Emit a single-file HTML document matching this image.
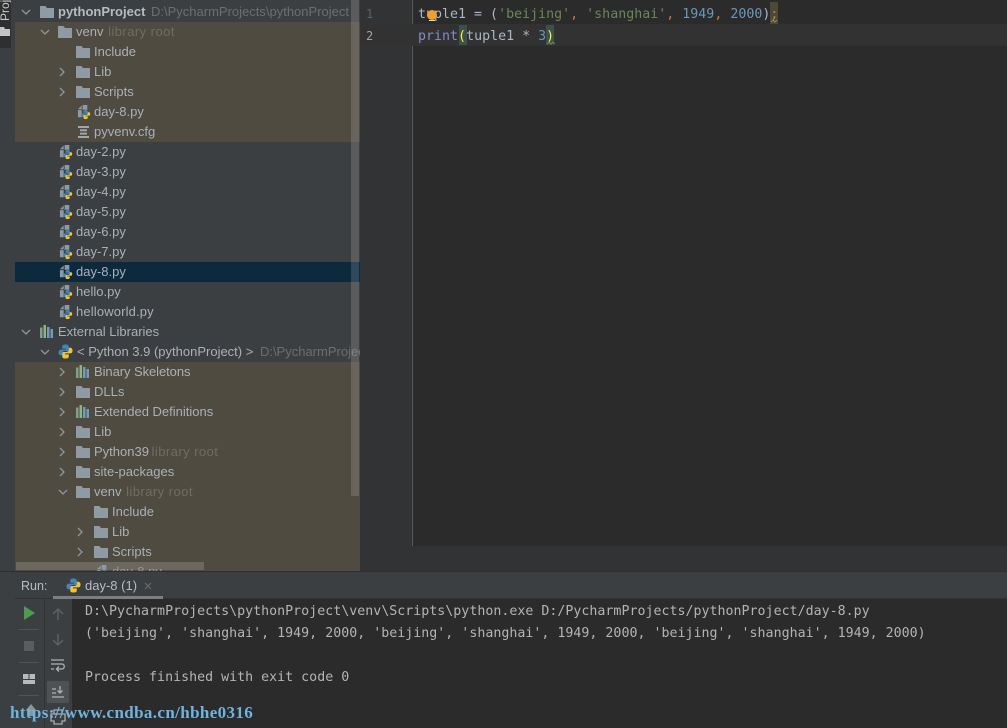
<!DOCTYPE html>
<html><head><meta charset="utf-8">
<style>
html,body{margin:0;padding:0;background:#2b2b2b}
#p{position:relative;width:1007px;height:728px;overflow:hidden;background:#2b2b2b;font-family:"Liberation Sans",sans-serif;font-size:13px;color:#a9b7c6}
#p div{position:absolute}
.r{height:20px;line-height:20px;white-space:nowrap;color:#a9b1b7}
.g{color:#6a6f72}
.l{color:#6f6d64;letter-spacing:.45px}
svg{position:absolute;overflow:visible}
.m{font-family:"DejaVu Sans Mono","Liberation Mono",monospace;white-space:pre}
.c{font-size:13.28px;height:22px;line-height:22px;left:418px;color:#a9b7c6;letter-spacing:.02px}
.o{font-size:13.28px;height:22px;line-height:22px;left:85px;color:#b4b4b4;letter-spacing:.02px}
.s{color:#6a8759}.n{color:#6897bb}.k{color:#cc7832}.f{color:#8888c6}
</style></head><body><div id="p">
<svg width="0" height="0" style="position:absolute">
<defs>
<symbol id="fo" viewBox="0 0 14 12"><path d="M0 0h5.500l1.500 2h7v10H0z" fill="#8e9aa4"/></symbol>
<symbol id="pl" viewBox="0 0 16 16"><path d="M8 .5C5.500.5 4.500 1.500 4.500 3V5H8.500V6H3C1.500 6 .5 7 .5 9S1.500 12 3 12H4.500V10C4.500 8.500 5.500 7.500 7 7.500H10C11 7.500 11.500 7 11.500 6V3C11.500 1.500 10.500.5 8 .5Z" fill="#3f86bf"/><path d="M8 .5C5.500.5 4.500 1.500 4.500 3V5H8.500V6H3C1.500 6 .5 7 .5 9S1.500 12 3 12H4.500V10C4.500 8.500 5.500 7.500 7 7.500H10C11 7.500 11.500 7 11.500 6V3C11.500 1.500 10.500.5 8 .5Z" fill="#f0c33c" transform="rotate(180 8 8)"/></symbol>
<symbol id="py" viewBox="0 0 16 16"><path d="M1 4.500L5 0.500V4.500zM6 0h5v5H6c-1 0-1 1-1 1v7H1V5.500h5z" fill="#8d99a3"/><g transform="translate(4 5) scale(.65)"><path d="M8 .5C5.500.5 4.500 1.500 4.500 3V5H8.500V6H3C1.500 6 .5 7 .5 9S1.500 12 3 12H4.500V10C4.500 8.500 5.500 7.500 7 7.500H10C11 7.500 11.500 7 11.500 6V3C11.500 1.500 10.500.5 8 .5Z" fill="#3f86bf"/><path d="M8 .5C5.500.5 4.500 1.500 4.500 3V5H8.500V6H3C1.500 6 .5 7 .5 9S1.500 12 3 12H4.500V10C4.500 8.500 5.500 7.500 7 7.500H10C11 7.500 11.500 7 11.500 6V3C11.500 1.500 10.500.5 8 .5Z" fill="#f0c33c" transform="rotate(180 8 8)"/></g></symbol>
<symbol id="li" viewBox="0 0 14 14"><path d="M0 2.500h2.500V13H0z" fill="#7fa28f"/><path d="M3.500 0H6v13H3.500z" fill="#8fb57d"/><path d="M7 2h2.500v11H7z" fill="#6f9dbb"/><path d="M10.500 4H13v9h-2.500z" fill="#6f9dbb"/></symbol>
<symbol id="dn" viewBox="0 0 10 10"><path d="M1 3l4 4 4-4" fill="none" stroke="#8f969b" stroke-width="1.300"/></symbol>
<symbol id="rt" viewBox="0 0 10 10"><path d="M2 1l4 4-4 4" fill="none" stroke="#8f969b" stroke-width="1.300"/></symbol>
</defs></svg>

<!-- left strip -->
<div style="left:0;top:0;width:15px;height:728px;background:#3c3f41"></div>
<div style="left:0;top:0;width:11px;height:48px;background:#2d2f30"></div>
<div style="left:0;top:-1px;width:11px;height:24px;overflow:hidden"><div style="left:0;top:22px;color:#c8c8c8;font-size:12px;transform-origin:0 0;transform:rotate(-90deg);white-space:nowrap;line-height:11px">Proj</div></div>
<svg style="left:0;top:27px" width="10" height="9"><path d="M0 0h4l1 2h5v7H0z" fill="#c4c4c4"/></svg>

<!-- project pane -->
<div style="left:15px;top:0;width:345px;height:572px;background:#3c3f41"></div>
<div style="left:15px;top:22px;width:345px;height:120px;background:#4f4b41"></div>
<div style="left:15px;top:262px;width:345px;height:20px;background:#0d293e"></div>
<div style="left:15px;top:362px;width:345px;height:210px;background:#4f4b41"></div>

<svg style="left:21px;top:7px" width="10" height="10"><use href="#dn"/></svg>
<svg style="left:40px;top:6px" width="14" height="12"><use href="#fo"/></svg>
<div class="r" style="left:58px;top:2px;font-weight:bold;color:#b4bcc2">pythonProject <span class="g" style="font-weight:normal;font-size:13px;margin-left:2px">D:\PycharmProjects\pythonProject</span></div>

<svg style="left:40px;top:27px" width="10" height="10"><use href="#dn"/></svg>
<svg style="left:58px;top:26px" width="14" height="12"><use href="#fo"/></svg>
<div class="r" style="left:76px;top:22px">venv <span class="l" style="margin-left:1px">library root</span></div>

<svg style="left:76px;top:46px" width="14" height="12"><use href="#fo"/></svg>
<div class="r" style="left:94px;top:42px">Include</div>
<svg style="left:58px;top:67px" width="10" height="10"><use href="#rt"/></svg>
<svg style="left:76px;top:66px" width="14" height="12"><use href="#fo"/></svg>
<div class="r" style="left:94px;top:62px">Lib</div>
<svg style="left:58px;top:87px" width="10" height="10"><use href="#rt"/></svg>
<svg style="left:76px;top:86px" width="14" height="12"><use href="#fo"/></svg>
<div class="r" style="left:94px;top:82px">Scripts</div>
<svg style="left:77px;top:105px" width="15" height="15"><use href="#py"/></svg>
<div class="r" style="left:94px;top:102px">day-8.py</div>
<svg style="left:78px;top:126px" width="11" height="12"><path d="M0 0h11v2H0zM2 3.300h7v2H2zM2 6.600h7v2H2zM0 10h11v2H0z" fill="#a0a6aa"/></svg>
<div class="r" style="left:94px;top:122px">pyvenv.cfg</div>

<svg style="left:59px;top:145px" width="15" height="15"><use href="#py"/></svg><div class="r" style="left:76px;top:142px">day-2.py</div>
<svg style="left:59px;top:165px" width="15" height="15"><use href="#py"/></svg><div class="r" style="left:76px;top:162px">day-3.py</div>
<svg style="left:59px;top:185px" width="15" height="15"><use href="#py"/></svg><div class="r" style="left:76px;top:182px">day-4.py</div>
<svg style="left:59px;top:205px" width="15" height="15"><use href="#py"/></svg><div class="r" style="left:76px;top:202px">day-5.py</div>
<svg style="left:59px;top:225px" width="15" height="15"><use href="#py"/></svg><div class="r" style="left:76px;top:222px">day-6.py</div>
<svg style="left:59px;top:245px" width="15" height="15"><use href="#py"/></svg><div class="r" style="left:76px;top:242px">day-7.py</div>
<svg style="left:59px;top:265px" width="15" height="15"><use href="#py"/></svg><div class="r" style="left:76px;top:262px">day-8.py</div>
<svg style="left:59px;top:285px" width="15" height="15"><use href="#py"/></svg><div class="r" style="left:76px;top:282px">hello.py</div>
<svg style="left:59px;top:305px" width="15" height="15"><use href="#py"/></svg><div class="r" style="left:76px;top:302px;letter-spacing:.15px">helloworld.py</div>

<svg style="left:21px;top:327px" width="10" height="10"><use href="#dn"/></svg>
<svg style="left:40px;top:325px" width="14" height="14"><use href="#li"/></svg>
<div class="r" style="left:58px;top:322px">External Libraries</div>

<div style="left:15px;top:342px;width:345px;height:20px;overflow:hidden;background:#3c3f41">
<svg style="left:25px;top:5px" width="10" height="10"><use href="#dn"/></svg>
<svg style="left:43px;top:2px" width="15" height="15"><use href="#pl"/></svg>
<div class="r" style="left:62px;top:0">&lt; Python 3.9 (pythonProject) &gt; <span class="g" style="margin-left:3px">D:\PycharmProjects</span></div>
</div>

<svg style="left:58px;top:367px" width="10" height="10"><use href="#rt"/></svg><svg style="left:76px;top:365px" width="14" height="14"><use href="#li"/></svg><div class="r" style="left:94px;top:362px;letter-spacing:-.07px">Binary Skeletons</div>
<svg style="left:58px;top:387px" width="10" height="10"><use href="#rt"/></svg><svg style="left:76px;top:386px" width="14" height="12"><use href="#fo"/></svg><div class="r" style="left:94px;top:382px">DLLs</div>
<svg style="left:58px;top:407px" width="10" height="10"><use href="#rt"/></svg><svg style="left:76px;top:405px" width="14" height="14"><use href="#li"/></svg><div class="r" style="left:94px;top:402px">Extended Definitions</div>
<svg style="left:58px;top:427px" width="10" height="10"><use href="#rt"/></svg><svg style="left:76px;top:426px" width="14" height="12"><use href="#fo"/></svg><div class="r" style="left:94px;top:422px">Lib</div>
<svg style="left:58px;top:447px" width="10" height="10"><use href="#rt"/></svg><svg style="left:76px;top:446px" width="14" height="12"><use href="#fo"/></svg><div class="r" style="left:94px;top:442px">Python39 <span class="l" style="margin-left:-1px">library root</span></div>
<svg style="left:58px;top:467px" width="10" height="10"><use href="#rt"/></svg><svg style="left:76px;top:466px" width="14" height="12"><use href="#fo"/></svg><div class="r" style="left:94px;top:462px">site-packages</div>
<svg style="left:58px;top:487px" width="10" height="10"><use href="#dn"/></svg><svg style="left:76px;top:486px" width="14" height="12"><use href="#fo"/></svg><div class="r" style="left:94px;top:482px">venv <span class="l" style="margin-left:1px">library root</span></div>
<svg style="left:94px;top:506px" width="14" height="12"><use href="#fo"/></svg><div class="r" style="left:112px;top:502px">Include</div>
<svg style="left:76px;top:527px" width="10" height="10"><use href="#rt"/></svg><svg style="left:94px;top:526px" width="14" height="12"><use href="#fo"/></svg><div class="r" style="left:112px;top:522px">Lib</div>
<svg style="left:76px;top:547px" width="10" height="10"><use href="#rt"/></svg><svg style="left:94px;top:546px" width="14" height="12"><use href="#fo"/></svg><div class="r" style="left:112px;top:542px">Scripts</div>
<div style="left:16px;top:562px;width:188px;height:8px;background:#6a685f"></div>
<div style="left:94px;top:562px;width:80px;height:9px;overflow:hidden"><svg style="left:2px;top:3px" width="15" height="15"><use href="#py"/></svg><div class="r" style="left:18px;top:0;color:#98978f">day-8.py</div></div>
<div style="left:351px;top:0;width:8px;height:496px;background:rgba(255,255,255,.15)"></div>

<!-- editor -->
<div style="left:360px;top:0;width:53px;height:547px;background:#313335"></div>
<div style="left:412px;top:0;width:1px;height:547px;background:#555759"></div>
<div style="left:360px;top:24px;width:53px;height:22px;background:#323232"></div>
<div style="left:413px;top:24px;width:594px;height:22px;background:#323232"></div>
<div class="m" style="left:366px;top:3px;font-size:12px;line-height:22px;color:#606366">1</div>
<div class="m" style="left:366px;top:25px;font-size:12px;line-height:22px;color:#a4a3a3">2</div>
<div style="left:770px;top:2px;width:8px;height:22px;background:#4a4a36"></div>
<div style="left:459px;top:25px;width:8px;height:20px;background:#3b514d"></div>
<div style="left:546px;top:25px;width:8px;height:20px;background:#3b514d"></div>
<div class="m c" style="top:4px">tuple1 = (<span class="s">'beijing'</span><span class="k">,</span> <span class="s">'shanghai'</span><span class="k">,</span> <span class="n">1949</span><span class="k">,</span> <span class="n">2000</span>)<span class="k">;</span></div>
<div class="m c" style="top:26px"><span class="f">print</span><span style="color:#ffef28">(</span>tuple1 * <span class="n">3</span><span style="color:#ffef28">)</span></div>
<div style="left:427px;top:10px;width:10px;height:10px;border-radius:50%;background:#f0a030"></div>
<div style="left:429px;top:20px;width:6px;height:1px;background:#d9d9d9"></div>
<svg style="left:547px;top:42px" width="8" height="3"><path d="M0 2l2-2 2 2 2-2 2 2" fill="none" stroke="#6f8f6a" stroke-width=".8"/></svg>
<svg style="left:771px;top:20px" width="7" height="3"><path d="M0 2l2-2 2 2 2-2" fill="none" stroke="#8f9f7a" stroke-width=".8"/></svg>
<div style="left:360px;top:547px;width:647px;height:25px;background:#313335"></div>
<div style="left:360px;top:546px;width:647px;height:1px;background:#323232"></div>
<div style="left:0;top:571px;width:1007px;height:1px;background:#2e2f30"></div>

<!-- run tool window -->
<div style="left:15px;top:572px;width:992px;height:27px;background:#3c3f41"></div>
<div style="left:15px;top:598px;width:992px;height:1px;background:#323232"></div>
<div class="r" style="left:21px;top:576px;color:#b5bcc2;font-size:12.500px">Run:</div>
<svg style="left:66px;top:578px" width="15" height="15"><use href="#pl"/></svg>
<div class="r" style="left:85px;top:576px;color:#b5bcc2;font-size:13px">day-8 (1)</div>
<svg style="left:144px;top:582px" width="8" height="8"><path d="M1 1l6 6M7 1l-6 6" stroke="#66696b" stroke-width="1.200"/></svg>
<div style="left:53px;top:596px;width:110px;height:3px;background:#7b7f82"></div>

<div style="left:15px;top:599px;width:29px;height:129px;background:#3c3f41"></div>
<div style="left:44px;top:599px;width:28px;height:129px;background:#3c3f41;border-left:1px solid #323232;box-sizing:border-box"></div>
<div style="left:72px;top:599px;width:935px;height:129px;background:#2b2b2b"></div>
<svg style="left:24px;top:606px" width="12" height="14"><path d="M0 0l11 7-11 7z" fill="#4f9a4f"/></svg>
<div style="left:19px;top:629px;width:20px;height:1px;background:#515354"></div>
<div style="left:24px;top:641px;width:10px;height:10px;background:#5a5c5e"></div>
<div style="left:19px;top:662px;width:20px;height:1px;background:#515354"></div>
<svg style="left:23px;top:674px" width="12" height="10"><path d="M0 0h5.500v5H0zM6.500 0H12v5H6.500zM0 6h12v4H0z" fill="#b6babd"/></svg>
<div style="left:19px;top:695px;width:20px;height:1px;background:#515354"></div>
<svg style="left:52px;top:607px" width="12" height="14"><path d="M6 13V2M1 7l5-5 5 5" fill="none" stroke="#5c6163" stroke-width="1.500"/></svg>
<svg style="left:52px;top:633px" width="12" height="14"><path d="M6 1v11M1 7l5 5 5-5" fill="none" stroke="#5c6163" stroke-width="1.500"/></svg>
<svg style="left:51px;top:659px" width="14" height="14"><path d="M0 1h13M0 5h11c3 0 3 5 0 5H6M8 7.500L5.500 10 8 12.500M0 10h3" fill="none" stroke="#afb1b3" stroke-width="1.300"/></svg>
<div style="left:47px;top:681px;width:22px;height:22px;background:#4f5254"></div>
<svg style="left:51px;top:686px" width="14" height="12"><path d="M9 0v7M6.500 4.500L9 7l2.500-2.500M1 3h4M1 7h4M1 11h12" fill="none" stroke="#afb1b3" stroke-width="1.300"/></svg>
<svg style="left:24px;top:703px" width="14" height="14"><path d="M7 1l5 6H9v6H5V7H2z" fill="#8f9395"/></svg>
<svg style="left:51px;top:710px" width="14" height="14"><path d="M3 0h8v4H3zM0 4h14v7H11v3H3v-3H0z" fill="none" stroke="#a9acae" stroke-width="1.300"/></svg>

<div class="m o" style="top:601px">D:\PycharmProjects\pythonProject\venv\Scripts\python.exe D:/PycharmProjects/pythonProject/day-8.py</div>
<div class="m o" style="top:623px">('beijing', 'shanghai', 1949, 2000, 'beijing', 'shanghai', 1949, 2000, 'beijing', 'shanghai', 1949, 2000)</div>
<div class="m o" style="top:667px">Process finished with exit code 0</div>

<!-- watermark -->
<div style="left:10px;top:702px;height:22px;line-height:22px;font-family:'Liberation Serif',serif;font-size:17px;font-weight:bold;color:#6fb4e0;white-space:nowrap;letter-spacing:.37px">https://www.cndba.cn/hbhe0316</div>
</div></body></html>
